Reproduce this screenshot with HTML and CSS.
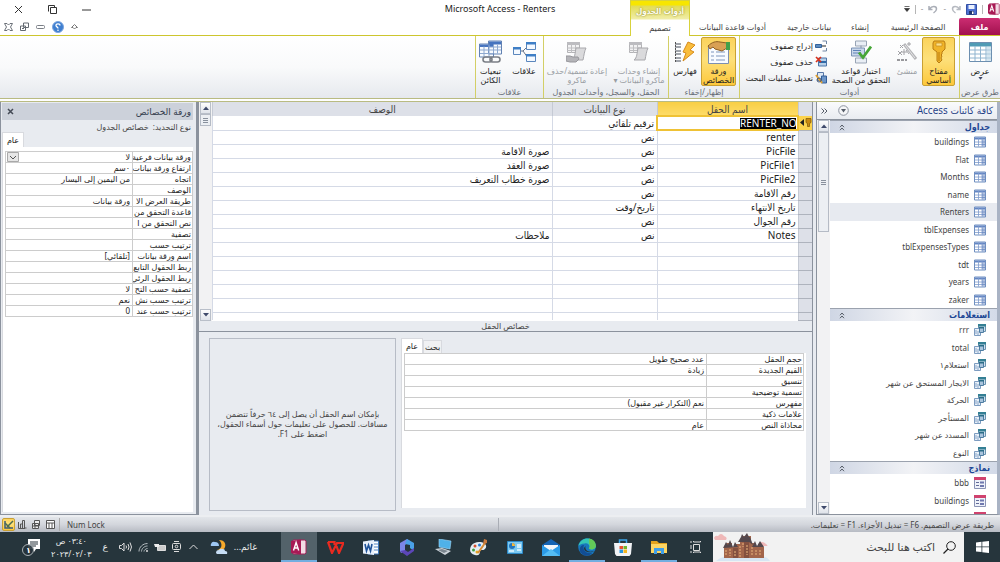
FILE: index.html
```html
<!DOCTYPE html>
<html lang="ar" dir="rtl">
<head>
<meta charset="utf-8">
<title>Microsoft Access - Renters</title>
<link rel="stylesheet" href="styles.css">
</head>
<body>
<svg class="defs" aria-hidden="true">
  <symbol id="i-table" viewBox="0 0 12 11"><path d="M.5.5h11v10H.5z" fill="#fff" stroke="#6f8fc0"/><path d="M1 1h10v2H1z" fill="#6486c4"/><path d="M1 5.500h10M1 8h10M4.500 1v9M8 1v9" stroke="#7d9acb" stroke-width=".8"/><path d="M8 3h3v7H8z" fill="#5577b8" opacity=".45"/></symbol>
  <symbol id="i-query" viewBox="0 0 12 12"><path d="M4.500.5h7v7h-7z" fill="#cfe0ee" stroke="#6a93ae"/><path d="M4 0h8v2.500H4z" fill="#347f94"/><path d="M.5 4.500h6v7h-6z" fill="#e8f0f8" stroke="#7d9cc0"/><path d="M5.500 3.500h4v5h-4z" fill="#a9c4dc" stroke="#4e7da2"/><path d="M5 3h5v1.500H5z" fill="#2b6d88"/><path d="M2 6v4M4 7v4" stroke="#89a5c8"/></symbol>
  <symbol id="i-form" viewBox="0 0 12 12"><path d="M.5.5h11v11H.5z" fill="#eef1f9" stroke="#8b93b5"/><path d="M0 0h12v3H0z" fill="#d0426e"/><path d="M2 5.500h3M2 8.500h3" stroke="#626b98"/><path d="M6 4.500h4v2H6zM6 8h4v2H6z" fill="#6f78ae"/></symbol>
  <symbol id="i-chevs" viewBox="0 0 6 7"><path d="M1 3.200 3 1l2 2.200M1 6.200 3 4l2 2.200" fill="none" stroke="#555c66"/></symbol>
  <symbol id="i-up" viewBox="0 0 6 4"><path d="M0 4 3 .5 6 4z" fill="#3f4a6b"/></symbol>
  <symbol id="i-down" viewBox="0 0 6 4"><path d="M0 0h6L3 3.500z" fill="#3f4a6b"/></symbol>
  <symbol id="i-key" viewBox="0 0 14 24"><path d="M2 1h10l1 2v6l-3 3v2l-1 1 1 1-1 2 1 2-3 3-2-2V12L1 9V3z" fill="#f0b429" stroke="#b97c12"/><path d="M4 3h6v3H4z" fill="#fbe08a" stroke="#c58a1a" stroke-width=".7"/><path d="M7 12v9" stroke="#b97c12"/></symbol>
  <symbol id="i-macro" viewBox="0 0 22 22"><path d="M1.500 1.500h12v10h-12z" fill="#f2f2f3" stroke="#b3b3b6"/><path d="M1 1h13v3H1z" fill="#bcbcc0"/><path d="M1 7h12M1 9.500h12M5.500 3v9M9.500 3v9" stroke="#bebec1"/><path d="M10 7h10c-1.500 3-2 7-3 12H6c3-2 3-7 4-12z" fill="#dadadc" stroke="#a8a8ac"/></symbol>
  <symbol id="i-access" viewBox="0 0 16 16"><path d="M2 1h12l1 1v12l-1 1H2z" fill="#f3dbe5" stroke="#a32258"/><path d="M0 2 10 .5v15L0 14z" fill="#a81a55"/><path d="m2.500 11.500 2.600-8 2.600 8M3.500 9h3.300" fill="none" stroke="#fff" stroke-width="1.400"/></symbol>
</svg>

<header class="top">
  <div class="titlebar">
    <div class="quick">
      <svg width="12" height="12"><use href="#i-access"/></svg>
      <span class="vline"></span>
      <button aria-label="حفظ"><svg width="11" height="11" viewBox="0 0 11 11"><path d="M.5.5h10v10h-10z" fill="#4b6fd0" stroke="#3450a4"/><path d="M2.500 1h6v4h-6z" fill="#eaf1fd"/><path d="M3 7h5v3.500H3z" fill="#20366f"/><path d="M6 7.500h1.500v2.500H6z" fill="#fff"/></svg></button>
      <button aria-label="إعادة"><svg width="10" height="9" viewBox="0 0 10 9"><path d="M9 1v3.500H5.500M8.500 4C6 .5 1.500 1 1.500 4c0 2 1.500 3 3 4" fill="none" stroke="#b5b9c0" stroke-width="1.500"/></svg></button>
      <span class="dash">-</span>
      <button aria-label="تراجع"><svg width="10" height="9" viewBox="0 0 10 9"><path d="M1 1v3.500h3.500M1.500 4C4 .5 8.500 1 8.500 4c0 2-1.500 3-3 4" fill="none" stroke="#a9adb6" stroke-width="1.500"/></svg></button>
      <span class="dash">-</span>
      <span class="vline"></span>
      <button aria-label="تخصيص"><svg width="6" height="6" viewBox="0 0 6 6"><path d="M.5.500h5M.5 2.500h5L3 5.500z" fill="#333" stroke="#333" stroke-width=".7"/></svg></button>
    </div>
    <h1 dir="ltr">Microsoft Access - Renters</h1>
    <div class="window">
      <button aria-label="تصغير"><svg width="9" height="9"><path d="M0 5h9" stroke="#333"/></svg></button>
      <button aria-label="استعادة"><svg width="9" height="9" viewBox="0 0 9 9"><path d="M2.500 2.500h6v6h-6zM.5 6.500v-6h6v2" fill="none" stroke="#333"/></svg></button>
      <button aria-label="إغلاق"><svg width="9" height="9"><path d="m1 1 7 7m0-7L1 8" stroke="#333"/></svg></button>
    </div>
  </div>
  <nav class="tabs">
    <button class="file">ملف</button>
    <button class="tab t1">الصفحة الرئيسية</button>
    <button class="tab t2">إنشاء</button>
    <button class="tab t3">بيانات خارجية</button>
    <button class="tab t4">أدوات قاعدة البيانات</button>
    <div class="context"><span>أدوات الجدول</span><button>تصميم</button></div>
    <div class="docbtns">
      <button aria-label="تصغير الشريط"><svg width="7" height="6" viewBox="0 0 7 6"><path d="m.5 3.500 3-3 3 3H5L3.500 5 2 3.500z" fill="none" stroke="#777"/></svg></button>
      <button aria-label="تعليمات"><svg width="12" height="12" viewBox="0 0 12 12"><circle cx="6" cy="6" r="5.500" fill="#3f7fd0" stroke="#7ba5df"/><path d="M8 4.500c0-2.300-4-2.300-4 0 0 1.500 2 1.200 2 3" fill="none" stroke="#fff" stroke-width="1.300"/><circle cx="6" cy="9.300" r=".8" fill="#fff"/></svg></button>
      <button aria-label="تصغير المستند"><svg width="9" height="4" viewBox="0 0 9 4"><rect x=".5" y=".5" width="8" height="3" rx="1" fill="#fff" stroke="#7a7f86"/></svg></button>
      <button aria-label="استعادة المستند"><svg width="9" height="9" viewBox="0 0 9 9"><path d="M3.500 1h5v4.500h-5zM.5 4h5v4.500h-5z" fill="#fff" stroke="#646a72"/><path d="M2 6.500h2" stroke="#646a72"/></svg></button>
      <button aria-label="إغلاق المستند"><svg width="9" height="8" viewBox="0 0 9 8"><path d="M.5.500h2.500L4.500 2 6 .5h2.500L6.500 4l2 3.500H6L4.500 6 3 7.500H.5l2-3.500z" fill="#fff" stroke="#6b7078"/></svg></button>
    </div>
  </nav>
</header>

<section class="ribbon">
  <div class="group g1">
    <div class="tools"><button class="big b-view"><svg width="23" height="20" viewBox="0 0 23 20"><path d="M.5.5h22v19H.5z" fill="#fff" stroke="#6c8fb0"/><path d="M1 1h21v3.500H1z" fill="#4f9bb5"/><path d="M1 8h21M1 12h21M1 16h21M6 4v15M11.500 4v15M17 4v15" stroke="#8fb4cf"/><path d="M17.500 5H22v14h-4.500z" fill="#b9d6e6" opacity=".6"/></svg><span>عرض</span><svg width="5" height="3" viewBox="0 0 6 4"><use href="#i-down"/></svg></button></div>
    <h2>طرق عرض</h2>
  </div>
  <div class="group g2">
    <div class="tools">
      <button class="big on b-key"><svg width="16" height="24"><use href="#i-key"/></svg><span>مفتاح<br>أساسي</span></button>
      <button class="big off b-builder"><svg width="22" height="22" viewBox="0 0 22 22"><path d="m8 3 12 15" stroke="#b5b5b8" stroke-width="3"/><path d="m9 4 10 13" stroke="#e6e6e8"/><path d="M4 4l3 3m0-3L4 7M2 10l4 4m0-4-4 4M10 9l3 4M8 8v6M5 11h6M13 1v4M11 3h4" stroke="#a2a2a6"/><path d="M1 19h3m1 0h3m1 0h2" stroke="#98989c" stroke-width="2"/></svg><span>منشئ</span></button>
      <button class="big b-rules"><svg width="22" height="23" viewBox="0 0 22 23"><path d="M5.500.5h11v5h-11zM5.500 17.500h11v5h-11z" fill="#e9eef5" stroke="#99a5b5"/><path d="M11 5v13" stroke="#8795a8"/><path d="M1.500 7.500h13v8h-13z" fill="#c9d7ea" stroke="#7b92b5"/><path d="M3 10h8M3 12.500h8" stroke="#5e83b8"/><path d="m9 12 4 5 8-11" fill="none" stroke="#46a637" stroke-width="2.800"/></svg><span>اختبار قواعد<br>التحقق من الصحة</span></button>
      <div class="smalls">
        <button><svg width="12" height="12" viewBox="0 0 12 12"><path d="M7.500 1h4v3M7.500 11h4V8" fill="none" stroke="#7087a5"/><path d="M.5 4.500h6v3h-6z" fill="#5b8cc0" stroke="#35639c"/><path d="M7 6h4" stroke="#222"/></svg>إدراج صفوف</button>
        <button><svg width="12" height="12" viewBox="0 0 12 12"><path d="M3.500 2h8v8h-8z" fill="#b6d0ea" stroke="#4d74a8"/><path d="M4 6h7" stroke="#2f6aa8" stroke-width="2"/><path d="m1 1 5 5m0-5L1 6" stroke="#d8311c" stroke-width="1.700"/></svg>حذف صفوف</button>
        <button><svg width="12" height="12" viewBox="0 0 12 12"><path d="M2.500.5h6v8h-6z" fill="#dce8f5" stroke="#5878a8"/><path d="M6.500 4h5v7h-5z" fill="#6c96c9" stroke="#345e98"/><path d="m1 3 6 8" stroke="#e0a030" stroke-width="2"/><circle cx="4" cy="8" r="2" fill="none" stroke="#44597a"/></svg>تعديل عمليات البحث</button>
      </div>
    </div>
    <h2>أدوات</h2>
  </div>
  <div class="group g3">
    <div class="tools">
      <button class="big on b-sheet"><svg width="24" height="24" viewBox="0 0 24 24"><path d="M1.500 6.500h20v17h-20z" fill="#f8fbff" stroke="#7d8fb0"/><path d="M4 12h3m2 0h9M4 16h3m2 0h9M4 20h3m2 0h9" stroke="#7e96bd"/><path d="M1 6c4-4 8-5 12-4l7 1v5l-5 3-7-2-2-2-3 2z" fill="#d9a054" stroke="#8f6024"/><path d="M19 2h4v8h-4z" fill="#42a04a"/></svg><span>ورقة<br>الخصائص</span></button>
      <button class="big b-index"><svg width="22" height="22" viewBox="0 0 22 22"><path d="M1 3h6M1 6h6M1 10h6M1 13h6M1 17h6M1 20h6" stroke="#818690" stroke-width="1.600"/><path d="M1.500 1v20" stroke="#555" stroke-dasharray="2 1"/><path d="m14 1 7 3-5 5 4 2L9 20l3-8-3-1z" fill="#f9bd3c" stroke="#d58a1c"/></svg><span>فهارس</span></button>
    </div>
    <h2>إظهار/إخفاء</h2>
  </div>
  <div class="group g4">
    <div class="tools">
      <button class="big off b-create"><svg width="22" height="22"><use href="#i-macro"/></svg><span>إنشاء وحدات<br>ماكرو البيانات ▾</span></button>
      <button class="big off b-rename"><svg width="22" height="22" viewBox="0 0 22 22"><use href="#i-macro"/><path d="M0 15h4l3 1h5l1 2-3 3H4l-4-1z" fill="#b4b4b8" stroke="#96969b"/></svg><span>إعادة تسمية/حذف<br>ماكرو</span></button>
    </div>
    <h2>الحقل، والسجل، وأحداث الجدول</h2>
  </div>
  <div class="group g5">
    <div class="tools">
      <button class="big b-rel"><svg width="23" height="22" viewBox="0 0 23 22"><path d="M7 10h3l5-5m-5 5 5 7" fill="none" stroke="#68748a"/><path d="M.5 6.500h7v7h-7zM13.500 1.500h9v7h-9zM13.500 13.500h9v7h-9z" fill="#f4f9ff" stroke="#5b87bd"/><path d="M0 6h8v2.500H0zM13 1h10v2.500H13zM13 13h10v2.500H13z" fill="#3f7fc6"/></svg><span>علاقات</span></button>
      <button class="big b-deps"><svg width="23" height="23" viewBox="0 0 23 23"><path d="M.5 3.500h14v13H.5zM9.500.5h13v13h-13z" fill="#f8fbff" stroke="#6282b3"/><path d="M1 4h13v2.500H1zM10 1h12v3H10z" fill="#4674bf"/><path d="M1 9.500h21M1 13h13M5 6v10M10 4v12M14.500 4v9M18.500 4v9M10 6.500h12" stroke="#8ea9d0"/><rect x="4" y="16.500" width="9" height="5" rx="2.500" fill="none" stroke="#7b7f86" stroke-width="1.600"/><rect x="11" y="16.500" width="10" height="5" rx="2.500" fill="none" stroke="#7b7f86" stroke-width="1.600"/></svg><span>تبعيات<br>الكائن</span></button>
    </div>
    <h2>علاقات</h2>
  </div>
</section>

<main class="work">
  <aside class="objects">
    <div class="objhead"><h2>كافة كائنات Access</h2><button class="round" aria-label="تصفية"><svg width="11" height="11" viewBox="0 0 11 11"><circle cx="5.500" cy="5.500" r="4.800" fill="#f5f6f8" stroke="#8c939e"/><path d="M3 4h5L5.500 7.500z" fill="#555c68"/></svg></button><button aria-label="طي"><svg width="7" height="6" viewBox="0 0 7 6"><path d="m.5.500 2.500 2.500L.5 5.500m3-5L6 3 3.500 5.500" fill="none" stroke="#555c68"/></svg></button></div>
    <div class="objbody">
      <div class="objlist">
        <h3>جداول<svg width="6" height="7"><use href="#i-chevs"/></svg></h3>
        <ul>
          <li><svg><use href="#i-table"/></svg>buildings</li><li><svg><use href="#i-table"/></svg>Flat</li><li><svg><use href="#i-table"/></svg>Months</li><li><svg><use href="#i-table"/></svg>name</li><li class="sel"><svg><use href="#i-table"/></svg>Renters</li><li><svg><use href="#i-table"/></svg>tblExpenses</li><li><svg><use href="#i-table"/></svg>tblExpensesTypes</li><li><svg><use href="#i-table"/></svg>tdt</li><li><svg><use href="#i-table"/></svg>years</li><li><svg><use href="#i-table"/></svg>zaker</li>
        </ul>
        <h3>استعلامات<svg width="6" height="7"><use href="#i-chevs"/></svg></h3>
        <ul>
          <li><svg><use href="#i-query"/></svg>rrr</li><li><svg><use href="#i-query"/></svg>total</li><li><svg><use href="#i-query"/></svg>استعلام١</li><li><svg><use href="#i-query"/></svg>الايجار المستحق عن شهر</li><li><svg><use href="#i-query"/></svg>الحركة</li><li><svg><use href="#i-query"/></svg>المستأجر</li><li><svg><use href="#i-query"/></svg>المسدد عن شهر</li><li><svg><use href="#i-query"/></svg>النوع</li>
        </ul>
        <h3>نماذج<svg width="6" height="7"><use href="#i-chevs"/></svg></h3>
        <ul>
          <li><svg><use href="#i-form"/></svg>bbb</li><li><svg><use href="#i-form"/></svg>buildings</li><li><svg><use href="#i-form"/></svg></li>
        </ul>
      </div>
      <div class="scroll"><button aria-label="أعلى"><svg width="6" height="4"><use href="#i-up"/></svg></button><div class="thumb long"></div><button class="end" aria-label="أسفل"><svg width="6" height="4"><use href="#i-down"/></svg></button></div>
    </div>
  </aside>

  <section class="design">
    <div class="fields">
      <table>
        <colgroup><col class="c-sel"><col class="c-name"><col class="c-type"><col></colgroup>
        <thead><tr><th class="corner"></th><th class="cur">اسم الحقل</th><th>نوع البيانات</th><th>الوصف</th></tr></thead>
        <tbody>
          <tr class="active"><th><svg width="12" height="9" viewBox="0 0 12 9"><path d="M4 1v7L0 4.500z" fill="#222"/><path d="M6 .5h5v4l-1.500 1v3h-2v-3L6 4.500z" fill="#c98a10" stroke="#7b5406" stroke-width=".7"/></svg></th><td><input aria-label="اسم الحقل" value="RENTER_NO"></td><td>ترقيم تلقائي</td><td></td></tr>
          <tr><th></th><td>renter</td><td>نص</td><td></td></tr>
          <tr><th></th><td>PicFile</td><td>نص</td><td>صورة الاقامة</td></tr>
          <tr><th></th><td>PicFile1</td><td>نص</td><td>صورة العقد</td></tr>
          <tr><th></th><td>PicFile2</td><td>نص</td><td>صورة خطاب التعريف</td></tr>
          <tr><th></th><td>رقم الاقامة</td><td>نص</td><td></td></tr>
          <tr><th></th><td>تاريخ الانتهاء</td><td>تاريخ/وقت</td><td></td></tr>
          <tr><th></th><td>رقم الجوال</td><td>نص</td><td></td></tr>
          <tr><th></th><td>Notes</td><td>نص</td><td>ملاحظات</td></tr>
          <tr><th></th><td></td><td></td><td></td></tr>
          <tr><th></th><td></td><td></td><td></td></tr>
          <tr><th></th><td></td><td></td><td></td></tr>
          <tr><th></th><td></td><td></td><td></td></tr>
          <tr><th></th><td></td><td></td><td></td></tr>
          <tr class="last"><th></th><td></td><td></td><td></td></tr>
        </tbody>
      </table>
      <div class="scroll"><button aria-label="أعلى"><svg width="6" height="4"><use href="#i-up"/></svg></button><div class="thumb"></div><button class="end" aria-label="أسفل"><svg width="6" height="4"><use href="#i-down"/></svg></button></div>
    </div>
    <h2 class="ftitle">خصائص الحقل</h2>
    <div class="lower">
      <div class="fprops">
        <div class="minitabs"><button class="sel">عام</button><button>بحث</button></div>
        <div class="panel">
          <table class="props wide">
            <colgroup><col class="c-label"><col></colgroup>
            <tr><th>حجم الحقل</th><td>عدد صحيح طويل</td></tr>
            <tr><th>القيم الجديدة</th><td>زيادة</td></tr>
            <tr><th>تنسيق</th><td></td></tr>
            <tr><th>تسمية توضيحية</th><td></td></tr>
            <tr><th>مفهرس</th><td>نعم (التكرار غير مقبول)</td></tr>
            <tr><th>علامات ذكية</th><td></td></tr>
            <tr><th>محاذاة النص</th><td>عام</td></tr>
          </table>
        </div>
      </div>
      <p class="hint">بإمكان اسم الحقل أن يصل إلى ٦٤ حرفاً تتضمن<br>مسافات. للحصول على تعليمات حول أسماء الحقول،<br>اضغط على F1.</p>
    </div>
  </section>

  <aside class="sheet">
    <div class="sheethead"><h2>ورقة الخصائص</h2><button aria-label="إغلاق"><svg width="7" height="7"><path d="m1 1 5 5m0-5L1 6" stroke="#444a55" stroke-width="1.500"/></svg></button></div>
    <p>نوع التحديد:&nbsp; خصائص الجدول</p>
    <div class="minitabs"><button class="sel">عام</button></div>
    <div class="panel">
      <table class="props">
        <colgroup><col class="c-label"><col></colgroup>
        <tr><th>ورقة بيانات فرعية</th><td><span class="pick"><select aria-label="ورقة بيانات فرعية"><option>لا</option></select><svg width="12" height="10" viewBox="0 0 12 10"><path d="M.5.5h11v9H.5z" fill="#e6e6e6" stroke="#a9a9a9"/><path d="m3 4 3 3 3-3" fill="none" stroke="#555"/></svg></span></td></tr>
        <tr><th>ارتفاع ورقة بيانات</th><td>٠سم</td></tr>
        <tr><th>اتجاه</th><td>من اليمين إلى اليسار</td></tr>
        <tr><th>الوصف</th><td></td></tr>
        <tr><th>طريقة العرض الا</th><td>ورقة بيانات</td></tr>
        <tr><th>قاعدة التحقق من</th><td></td></tr>
        <tr><th>نص التحقق من ا</th><td></td></tr>
        <tr><th>تصفية</th><td></td></tr>
        <tr><th>ترتيب حسب</th><td></td></tr>
        <tr><th>اسم ورقة بيانات</th><td>[تلقائي]</td></tr>
        <tr><th>ربط الحقول التابع</th><td></td></tr>
        <tr><th>ربط الحقول الرئي</th><td></td></tr>
        <tr><th>تصفية حسب التح</th><td>لا</td></tr>
        <tr><th>ترتيب حسب نش</th><td>نعم</td></tr>
        <tr><th>ترتيب حسب عند</th><td>0</td></tr>
      </table>
    </div>
  </aside>
</main>

<footer class="status">
  <span class="msg">طريقة عرض التصميم. F6 = تبديل الأجزاء. F1 = تعليمات.</span>
  <span class="num">Num Lock</span>
  <div class="views">
    <button aria-label="جدول"><svg width="9" height="9" viewBox="0 0 9 9"><path d="M.5.5h8v8h-8z" fill="#fff" stroke="#555"/><path d="M1 3h7M3 3v5M6 3v5" stroke="#555"/></svg></button>
    <button aria-label="محوري"><svg width="9" height="9" viewBox="0 0 9 9"><path d="M2.500.5h5v5h-5zM.5 3.500h6v5h-6z" fill="#eee" stroke="#555"/><path d="M3 4v4M1 6h5" stroke="#555"/></svg></button>
    <button aria-label="مخطط"><svg width="9" height="9" viewBox="0 0 9 9"><path d="M.5 2v6.500H7M2.500 8V4h2v4M4.500 4V.5h2V8h2" fill="none" stroke="#555"/></svg></button>
    <button class="on" aria-label="تصميم"><svg width="10" height="9" viewBox="0 0 10 9"><path d="M1 1v7h8" fill="none" stroke="#3c5c78" stroke-width="1.500"/><path d="m1 3 5 5M3 7l6-6" stroke="#4c6c50" stroke-width="1.500"/></svg></button>
  </div>
</footer>

<div class="taskbar">
  <button class="start" aria-label="ابدأ"><svg width="13" height="12" viewBox="0 0 13 12"><path d="M0 1.500 5.500.8v4.700H0zM6.300.7 13 0v5.500H6.300zM0 6.300h5.500V11L0 10.400zM6.300 6.300H13V12l-6.700-.8z" fill="#fff"/></svg></button>
  <label class="search"><svg width="13" height="13" viewBox="0 0 13 13"><circle cx="8" cy="5" r="4.300" fill="none" stroke="#222"/><path d="m5 8-4.500 4.500" stroke="#222" stroke-width="1.200"/></svg><input type="search" placeholder="اكتب هنا للبحث" aria-label="بحث">
    <svg class="castle" width="58" height="28" viewBox="0 0 58 28"><path d="M1 5q1-3 4-2 3-4 6 0 4 1 2 4H2zM45 11q4-4 8 0 3 2 0 2h-7z" fill="#efb8b8"/><path d="M3 28q9-7 20-4 12-6 23-1 8 0 11 5z" fill="#d7e6f4"/><path d="M11 25V14h3v-4h5v4h4v-3h4V6h3V3h8v7h3v3h4v-2h3v3h3v11z" fill="#a2654b"/><path d="M20 25V15h5v10zm11 0V8h5v17z" fill="#84503f"/><path d="m10 15 3-6 2 3 2-5 3 7 2-5 3 5zm15-6 3-5 1-3 2 3 3-4 2 4 1 0 3 8-4-3zm14 5 3-6 2 5 3-5 4 6z" fill="#54474c"/><path d="M13 17v6m4-7v7m5-5v5m5-10v11m3-14v4m4-2v10m5-8v9m4-6v6m4-6v6" stroke="#eab47d" stroke-dasharray="2 1"/></svg>
  </label>
  <div class="apps">
    <button aria-label="عرض المهام"><svg width="13" height="12" viewBox="0 0 13 12"><path d="M4.500 3.500h6v6h-6zM2 0v2M2 10v2M2 4v4M4.500 0v1h7V0M4.500 12v-1h7v1" fill="none" stroke="#ddd"/></svg></button>
    <button class="open" aria-label="الملفات"><svg width="16" height="14" viewBox="0 0 16 14"><path d="M0 1h6l2 2h8v10H0z" fill="#e3a21c"/><path d="M0 4h16v9H0z" fill="#fcd462"/><path d="M3 8h10v6h-3v-3H6v3H3z" fill="#3f9ee8"/></svg></button>
    <button aria-label="المتجر"><svg width="18" height="17" viewBox="0 0 18 17"><path d="M5.500 5V1h7v4" fill="none" stroke="#3ba4e8" stroke-width="1.500"/><path d="M0 4h18l-1 11-1.500 2h-13L1 15z" fill="#f1f3f5"/><path d="M5.500 7H9v3H5.500z" fill="#e8502e"/><path d="M9.500 7H13v3H9.500z" fill="#70b52c"/><path d="M5.500 10.500H9V14H5.500z" fill="#2795e0"/><path d="M9.500 10.500H13V14H9.500z" fill="#f5b51e"/></svg></button>
    <button class="open" aria-label="Edge"><svg width="18" height="18" viewBox="0 0 18 18"><circle cx="9" cy="9" r="8.800" fill="#1877bd"/><path d="M.5 8C2-2 17-2 17.800 8c0 4-6 4.500-7 2.500 2-3-1-6-4-5C3 5.500 1 7 .5 8z" fill="#35c5b5"/><path d="M11 .5c6 1 7 5 6.800 8-.8 3-5.500 3.500-7 2 2-2 1-4 .2-5z" fill="#63c958"/><path d="M6 7c-2 5 2 9 8 8-4 5-11 2-12-2-1-3 1-6 4-6z" fill="#124d94"/><path d="M7.500 8c-1 4 3 7 8.500 5-2 2-10 2-10-3z" fill="#26333b"/></svg></button>
    <button aria-label="البريد"><svg width="18" height="17" viewBox="0 0 18 17"><path d="m0 6 9-6 9 6v11H0z" fill="#1664b4"/><path d="M2 6h14v8H2z" fill="#f3f6fa"/><path d="m0 6 9 6 9-6v11H0z" fill="#2b9be8"/><path d="m0 17 9-7 9 7z" fill="#54bdf5"/></svg></button>
    <button aria-label="لوحة التحكم"><svg width="16" height="13" viewBox="0 0 16 13"><path d="M.5.5h15v12H.5z" fill="#7cc9f2" stroke="#2c89c8"/><circle cx="5" cy="5" r="3" fill="#2475bc"/><path d="M5 2v3h3a3 3 0 0 0-3-3z" fill="#f5b63a"/><path d="M10 4h4M10 6h4M10 9h4M2 10h5" stroke="#e8f7ff" stroke-width="1.500"/></svg></button>
    <button aria-label="الرسام"><svg width="18" height="17" viewBox="0 0 18 17"><path d="M9 3c6 0 9 4 6 7-2 2-4 0-5 2 0 3-1 5-5 4-5-1-6-5-4-9 2-3 5-4 8-4z" fill="#e4edf4"/><circle cx="5" cy="7" r="1.500" fill="#d7502e"/><circle cx="3.500" cy="11" r="1.500" fill="#3e9c40"/><circle cx="9.500" cy="6" r="1.500" fill="#2c7bd0"/><circle cx="7" cy="13" r="1.500" fill="#e6a924"/><path d="m15 4-7 10" stroke="#d78c36" stroke-width="2"/><path d="m13 5 1-5 3 1 0 3z" fill="#c8793d"/></svg></button>
    <button aria-label="الجهاز"><svg width="17" height="16" viewBox="0 0 17 16"><path d="m4 0 12 2-1 8L4 8z" fill="#4fb1e8" stroke="#9fdcff" stroke-width=".6"/><path d="m0 10 7-1 9 3-6 4z" fill="#cdd4da"/><path d="m3 11 4-1 6 2-4 2z" fill="#7a858e"/></svg></button>
    <button aria-label="Microsoft 365"><svg width="16" height="17" viewBox="0 0 16 17"><path d="M1 4 8 0l3 2-5 4v6l-4 2-1-2z" fill="#7d86e8"/><path d="m8 0 7 4v8l-4-3V6L6 5z" fill="#4aa0e6"/><path d="m1 12 5-1 3 2 6-4v3l-7 5z" fill="#5c46b8"/></svg></button>
    <button aria-label="Word"><svg width="16" height="15" viewBox="0 0 16 15"><path d="M5 1h10.500v13H5z" fill="#fff" stroke="#3c74b8"/><path d="M11 4h4M11 7h4M11 10h4" stroke="#4c82c4"/><path d="M0 1.500 11 0v15L0 13.500z" fill="#e8f0fb"/><path d="m2 4 1.500 7L5.500 5l2 6L9 4" fill="none" stroke="#1e5299" stroke-width="1.600"/></svg></button>
    <button aria-label="WPS"><svg width="17" height="13" viewBox="0 0 17 13"><path d="M1 1h6.500v3M1 1l4 11 5-10h6.500L12 12l-2.500-7" fill="none" stroke="#e82a20" stroke-width="2.200"/></svg></button>
    <button class="open current" aria-label="Access"><svg width="16" height="16"><use href="#i-access"/></svg></button>
  </div>
  <div class="tray">
    <span class="weather">غائم...</span>
    <svg width="18" height="17" viewBox="0 0 18 17"><path d="M9 1c6 0 8 5 5 9-3 3-7 1-7 1 5-1 6-6 2-10z" fill="#f6a92b"/><path d="M1 5q1-3 4-2 4 0 4 4H2q-2 0-1-2z" fill="#9fc8f2"/><path d="M6 14q0-3 3-3 1-2 4-1 2 0 2 2 3 0 2 3H7z" fill="#c6ddf5"/></svg>
    <svg class="up" width="9" height="6" viewBox="0 0 9 6"><path d="m.5 5 4-4 4 4" fill="none" stroke="#ddd"/></svg>
    <svg width="9" height="12" viewBox="0 0 9 12"><rect x=".5" y="2.500" width="8" height="6" rx="1" fill="none" stroke="#ddd"/><circle cx="4.500" cy="5.500" r="1.300" fill="none" stroke="#ddd"/><path d="M2 .5h5M2 10.500h5" stroke="#ddd"/></svg>
    <svg width="12" height="8" viewBox="0 0 12 8"><path d="M3.500 2.500h8v5h-8z" fill="#ccc" stroke="#ddd"/><path d="M0 1h5v3H1z" fill="#eee"/></svg>
    <svg width="10" height="9" viewBox="0 0 10 9"><path d="M1 8.500C1 4 5 .5 9.500.5M3.500 8.500c0-3 3-5.500 6-5.500M6 8.500C6 7 8 5.500 9.500 5.500" fill="none" stroke="#b5bcc0"/><circle cx="9" cy="8" r="1" fill="#ddd"/></svg>
    <svg width="13" height="10" viewBox="0 0 13 10"><path d="M.5 3.500h2L5 1v8L2.500 6.500h-2z" fill="none" stroke="#ddd"/><path d="M7 3.500q1 1.500 0 3M9 2q2 3 0 6M11 .5q3 4.500 0 9" fill="none" stroke="#ddd"/></svg>
    <span class="lang">ع</span>
    <span class="clock">٠٣:٤٠ ص<br>٢٠٢٣/٠٢/٠٣</span>
    <button class="note" aria-label="الإشعارات"><svg width="18" height="18" viewBox="0 0 18 18"><path d="M6 1h12v10h-4l-2 3v-3H6z" fill="#fff"/><path d="M8 4h8M8 6h8M8 8h6" stroke="#26333b"/><circle cx="6" cy="12" r="5.500" fill="#26333b" fill-opacity=".9" stroke="#aab1b5"/></svg><b>١</b></button>
  </div>
</div>
</body>
</html>
```

FILE: styles.css
```css
* { box-sizing: border-box; }
html, body { height: 100%; }
body {
  margin: 0;
  display: flex;
  flex-direction: column;
  overflow: hidden;
  background: #fff;
  color: #222;
  font: 8px/10px "Noto Sans", "DejaVu Sans", sans-serif;
}
h1, h2, h3, p, ul { margin: 0; padding: 0; font-size: inherit; font-weight: normal; }
ul { list-style: none; }
button, input, select { font: inherit; color: inherit; margin: 0; padding: 0; border: 0; background: none; }
svg { display: block; flex: none; }
.defs { display: none; }

/* title bar and tabs */
.top { flex: none; }
.titlebar { display: grid; grid-template-columns: 1fr auto 1fr; align-items: center; height: 18px; }
.titlebar h1 { font: 9px/18px "Noto Sans", sans-serif; }
.quick { display: flex; align-items: center; gap: 5px; }
.quick .vline { width: 1px; height: 9px; background: #b5b5b5; }
.dash { color: #999; }
.window { display: flex; justify-content: flex-end; align-items: center; gap: 25px; padding-left: 14px; }
.tabs { display: flex; height: 18px; border-bottom: 1px solid #cdc62e; color: #444; }
.tabs button { white-space: nowrap; }
.file { width: 41px; color: #fff; font-weight: bold; background: linear-gradient(#cc2d72, #a1114e); border-radius: 2px 2px 0 0; }
.t1 { width: 82px; }
.t2 { width: 34px; }
.t3 { width: 68px; }
.t4 { width: 85px; }
.context {
  display: flex; flex-direction: column; justify-content: flex-end;
  width: 60px; height: 36px; margin-top: -18px;
  background: linear-gradient(#f7e600 0 4px, #e2dc55 5px, #f0eda8 18px, #fff 19px);
  border: 1px solid #d8d23c; border-bottom: 0;
}
.context span { line-height: 14px; text-align: center; white-space: nowrap; color: #fffef0; font-family: "DejaVu Sans Condensed", sans-serif; font-weight: bold; text-shadow: 0 0 2px #77701a; }
.context button { height: 17px; }
.docbtns { display: flex; align-items: center; gap: 7px; margin-right: auto; padding-left: 4px; }

/* ribbon */
.ribbon { flex: none; display: flex; height: 66px; background: linear-gradient(#fff, #f9fafb 50%, #e6e9ee); border-bottom: 4px double #b9bb82; }
.group { display: flex; flex-direction: column; border-left: 1px solid #d3cf66; }
.tools { display: flex; flex: 1; padding-top: 1px; }
.group h2 { height: 13px; line-height: 11px; text-align: center; color: #666c75; white-space: nowrap; }
.g1 { width: 41px; }
.g2 { width: 220px; }
.g3 { width: 71px; }
.g4 { width: 125px; }
.g5 { width: 68px; }
.big { display: flex; flex-direction: column; align-items: center; gap: 2px; height: 49px; padding-top: 3px; line-height: 9px; white-space: nowrap; }
.big > svg:first-child { height: 24px; }
.on { background: linear-gradient(#fbd35c, #fde07b 45%, #fdc83c); border: 1px solid #c9a034; border-radius: 2px; }
.big.on { padding-top: 2px; }
.off { color: #999da3; }
.b-view { width: 40px; }
.b-key { width: 33px; margin-right: 4px; }
.b-builder { width: 30px; }
.b-rules { width: 62px; }
.smalls { display: flex; flex-direction: column; gap: 4px; padding: 3px 3px 0 0; }
.smalls button { display: flex; align-items: center; gap: 2px; height: 12px; white-space: nowrap; }
.b-sheet { width: 35px; margin-right: 3px; }
.b-index { width: 32px; }
.b-create { width: 58px; }
.b-rename { width: 66px; }
.b-rel { width: 38px; }
.b-deps { width: 29px; }

/* work area */
.work { flex: 1; display: flex; min-height: 0; background: #e8ebf0; }
.objects { flex: none; display: flex; flex-direction: column; width: 184px; margin-left: 3px; border: solid #8b929d; border-width: 0 3px 1px 1px; border-right-color: #a9b3c4; background: #f3f5f8; }
.objhead { display: flex; align-items: center; gap: 10px; height: 18px; padding: 0 4px; background: linear-gradient(#fafbfc, #e9ecf1); border-bottom: 1px solid #8b929d; }
.objhead h2 { flex: 1; font: 10px/14px "DejaVu Sans Condensed", sans-serif; color: #1f4086; }
.objbody { flex: 1; display: flex; min-height: 0; }
.objlist { flex: 1; overflow: hidden; background: #fff; }
.objlist h3 { display: flex; align-items: center; justify-content: space-between; height: 13px; padding: 0 7px 0 9px; font: bold 9px/12px "DejaVu Sans Condensed", sans-serif; color: #1e4795; background: linear-gradient(90deg, #cfd6e4, #f2f3f6 50%, #d3dae8); border-top: 1px solid #9ba2ae; }
.objlist li { display: flex; align-items: center; gap: 5px; height: 18px; padding-right: 11px; color: #444; }
.objlist li:nth-child(even) { height: 17px; }
.objlist li svg { width: 12px; height: 12px; }
.objlist .sel { background: #e7eaf0; }
.scroll { flex: none; display: flex; flex-direction: column; width: 13px; padding: 0 1px; background: #f2f2f3; }
.scroll button { display: flex; align-items: center; justify-content: center; height: 12px; background: linear-gradient(#fdfdfd, #dfe3ea); border: 1px solid #b9bfc9; }
.scroll .end { margin-top: auto; }
.thumb { height: 12px; border: 1px solid #b5bbc5; background: linear-gradient(#88909c 0 0) center / 5px 1px no-repeat, linear-gradient(#88909c 0 0) 50% calc(50% - 2px) / 5px 1px no-repeat, linear-gradient(#88909c 0 0) 50% calc(50% + 2px) / 5px 1px no-repeat, #eceff3; }
.thumb.long { height: 100px; }

.design { flex: 1; display: flex; flex-direction: column; min-width: 0; border-left: 1px solid #8b929d; border-right: 1px solid #8b929d; }
.fields { display: flex; background: #fff; }
table { border-collapse: collapse; table-layout: fixed; }
th { font-weight: normal; }
td, th { padding: 0; overflow: hidden; white-space: nowrap; }
.fields table { flex: 1; width: 100%; font: 10px/12px "Noto Sans", "DejaVu Sans Condensed", sans-serif; }
.c-sel { width: 14px; }
.c-name { width: 141px; }
.c-type { width: 105px; }
.fields tr { height: 14px; }
.fields .last { height: 8px; }
.fields td { padding: 0 2px; text-align: right; border: 1px solid #d5dae6; border-top: 0; }
.fields tbody tr:last-child td { border-bottom: 0; }
.fields th { color: #444; background: #dde0e8; border-left: 1px solid #c5cad4; }
.fields tbody th { border-bottom: 1px solid #aeb3bd; }
.fields thead .cur { background: linear-gradient(#f8ce45, #fddb68); }
.fields .active th { background: #fcd34e; }
.fields .active td:nth-child(2) { border: 2px solid #efc235; padding: 0 1px; }
.fields input { display: block; width: 56px; height: 11px; color: #fff; background: #000; direction: ltr; text-align: right; }
.ftitle { height: 11px; text-align: center; color: #444; border-bottom: 1px solid #8b929d; }
.lower { flex: 1; display: flex; gap: 5px; padding: 6px 6px 4px 10px; }
.fprops { flex: 1; display: flex; flex-direction: column; padding-bottom: 3px; }
.minitabs { flex: none; display: flex; direction: ltr; align-items: flex-end; height: 15px; }
.minitabs button { width: 19px; height: 13px; background: #f0f1f3; border: 1px solid #d8dadf; border-bottom: 0; }
.minitabs .sel { width: 22px; height: 15px; background: #fff; }
.panel { flex: 1; padding: 0 2px; background: #fff; border-left: 1px solid #d8dadf; }
.props { width: 100%; line-height: 10px; color: #222; }
.props tr { height: 11px; }
.props th, .props td { height: 11px; padding: 0 1px; text-align: right; border: 1px solid #ccc; }
.props td { padding-right: 2px; }
.wide .c-label { width: 97px; }
.hint { display: flex; align-items: center; justify-content: center; flex: 0 0 187px; text-align: center; white-space: nowrap; color: #444; border: 1px solid #b7bcc6; }

.sheet { flex: none; display: flex; flex-direction: column; width: 198px; padding: 1px 3px 2px 1px; border: solid #8b929d; border-width: 0 2px 1px 1px; }
.sheethead { display: flex; align-items: center; justify-content: space-between; height: 17px; padding: 0 2px 0 5px; color: #333c4d; background: #ccd1da; }
.sheethead h2 { font-size: 9px; }
.sheet p { height: 12px; padding-right: 2px; line-height: 13px; color: #444; white-space: nowrap; }
.sheet .panel { padding: 4px 0 0 2px; }
.sheet .c-label { width: 60px; }
.pick { display: flex; align-items: center; height: 10px; }
.pick select { flex: 1; min-width: 0; height: 10px; appearance: none; }

/* status bar */
.status { flex: none; display: flex; align-items: center; height: 17px; padding: 0 6px 0 2px; color: #444; background: linear-gradient(#e3e6ea, #d3d6dc 50%, #b7bbc3); border-top: 2px solid #eceef1; }
.msg { flex: 0 0 50%; line-height: 13px; border-left: 1px solid #a9adb5; }
.num { margin-right: auto; padding-left: 7px; }
.views { display: flex; gap: 1px; padding-right: 2px; border-right: 1px solid #aaa; }
.views button { display: flex; align-items: center; justify-content: center; width: 13px; height: 13px; }

/* desktop taskbar */
.taskbar { flex: none; display: flex; height: 30px; color: #eee; background: #26353c; }
.start { flex: none; width: 36px; display: flex; align-items: center; justify-content: center; }
.search { flex: none; display: flex; align-items: center; gap: 8px; width: 251px; padding-right: 8px; color: #333; background: #f2f2f2; font: 11px/16px "Noto Sans", "DejaVu Sans", sans-serif; }
.search input { flex: 1; min-width: 0; outline: 0; }
.search input::placeholder { color: #444; opacity: 1; }
.apps { flex: none; display: flex; }
.apps button { display: flex; align-items: center; justify-content: center; width: 36px; border: solid transparent; border-width: 2px 0; }
.apps .open { border-bottom-color: #72aee0; }
.apps .current { background: #53626a; }
.tray { flex: 1; display: flex; align-items: center; min-width: 0; padding-right: 24px; gap: 6px; }
.tray .weather { font-size: 9px; }
.tray .up { margin: 0 6px 0 2px; }
.lang { margin-right: 5px; font-size: 9px; }
.clock { margin-right: 5px; text-align: center; line-height: 13px; white-space: nowrap; }
.note { position: relative; margin-right: 5px; }
.note b { position: absolute; left: 4px; top: 7px; font-size: 8px; color: #fff; }
```
